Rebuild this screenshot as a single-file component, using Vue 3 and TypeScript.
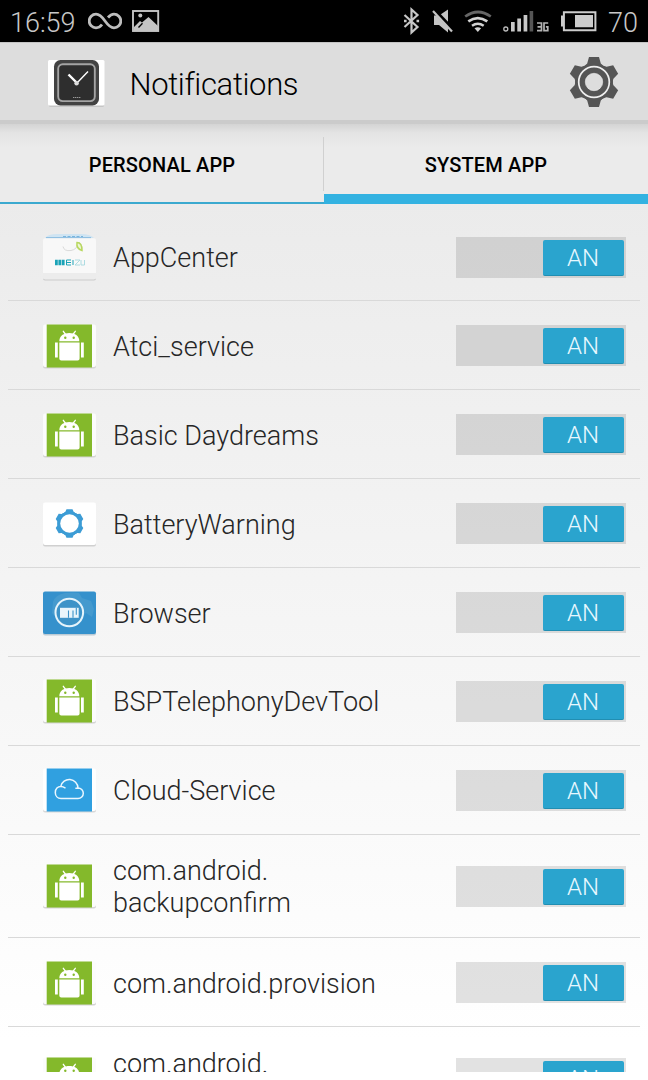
<script setup lang="ts">
type IconKind = 'store' | 'android' | 'battery' | 'browser' | 'cloud'

interface AppEntry {
  id: number
  lines: string[]
  icon: IconKind
  tall?: boolean
}

const tabs = [
  { label: 'PERSONAL APP', active: false },
  { label: 'SYSTEM APP', active: true },
]

const apps: AppEntry[] = [
  { id: 1, lines: ['AppCenter'], icon: 'store' },
  { id: 2, lines: ['Atci_service'], icon: 'android' },
  { id: 3, lines: ['Basic Daydreams'], icon: 'android' },
  { id: 4, lines: ['BatteryWarning'], icon: 'battery' },
  { id: 5, lines: ['Browser'], icon: 'browser' },
  { id: 6, lines: ['BSPTelephonyDevTool'], icon: 'android' },
  { id: 7, lines: ['Cloud-Service'], icon: 'cloud' },
  { id: 8, lines: ['com.android.', 'backupconfirm'], icon: 'android', tall: true },
  { id: 9, lines: ['com.android.provision'], icon: 'android' },
  { id: 10, lines: ['com.android.'], icon: 'android', tall: true },
]

const teeth = [0, 60, 120, 180, 240, 300]
</script>

<template>
  <div class="screen">
    <div class="status">
      <span class="time">16:59</span>
      <svg class="infinity" width="34" height="20" viewBox="0 0 34 20">
        <path d="M20 6.500C22 4.200 24 3.200 26 3.200a6.800 6.800 0 0 1 0 13.600C22 16.800 19.500 13.500 17 10S12 3.200 8 3.200a6.800 6.800 0 0 0 0 13.600C10.500 16.800 12.500 15.500 14 13.500" fill="none" stroke="#bdbdbd" stroke-width="2.800" />
      </svg>
      <svg class="picture" width="28" height="22" viewBox="0 0 28 22">
        <rect x="1" y="1" width="25.200" height="20" fill="none" stroke="#c4c4c4" stroke-width="1.900" />
        <circle cx="8.300" cy="5.500" r="2" fill="#c4c4c4" />
        <path d="M2 21v-4l6-6 2 1.500L16.500 7l9.500 9v5z" fill="#c4c4c4" />
        <path d="M6.500 17.500l4-4.200" stroke="#000" stroke-width="1.300" />
      </svg>
      <span class="spacer"></span>
      <svg class="indicators" width="200" height="42" viewBox="400 0 200 42">
        <path d="M404.500 15l13 12-6 5.500V9.500l6 5.500-13 12" fill="none" stroke="#c8c8c8" stroke-width="2.200" />
        <path d="M404 21h2.600M416.500 21h2.600" stroke="#c8c8c8" stroke-width="2.400" />
        <path d="M434 15.500h5l9-6v23l-9-7.500h-5z" fill="#c4c4c4" />
        <path d="M433.500 9.500l20 21" stroke="#000" stroke-width="4" />
        <path d="M433 11l19 20.500" stroke="#c4c4c4" stroke-width="2.200" />
        <g fill="none">
          <path d="M465.200 16.500q12.800-9 25.600 0" stroke="#666" stroke-width="2.700" />
          <path d="M468.300 21.300q9.500-6.500 19 0" stroke="#d2d2d2" stroke-width="2.700" />
          <path d="M472 25.800q5.800-4 11.700 0" stroke="#d2d2d2" stroke-width="2.500" />
        </g>
        <path d="M474.500 28.300q3.300-2 6.600 0l-3.300 3.600z" fill="#d2d2d2" />
        <circle cx="505.800" cy="29" r="2" fill="none" stroke="#bbb" stroke-width="1.300" />
        <path d="M511 22h3.700v9.500H511zM517.300 18.500h3.700v13h-3.700zM523.600 15h3.700v16.500h-3.700z" fill="#c8c8c8" />
        <path d="M529.600 11h3.600v20.500h-3.600z" fill="#555" />
        <path d="M537 23h4.500v7.700H537M537.500 26.800h4M548.200 23H544v7.700h3.800v-3.900h-1.900" fill="none" stroke="#b4b4b4" stroke-width="1.700" />
        <path d="M563.900 12.200h31.500v18h-31.500z" fill="none" stroke="#ccc" stroke-width="2" />
        <path d="M561 15.500h2.500v11H561zM575 15h18v12.200h-18z" fill="#ccc" />
      </svg>
      <span class="percent">70</span>
    </div>

    <header class="bar">
      <svg class="watch" width="60" height="54" viewBox="46 57 60 54">
        <rect x="49" y="62" width="55" height="45" rx="1.500" fill="#c6c6c6" />
        <rect x="48" y="60" width="56.500" height="45.500" rx="1.500" fill="#fff" />
        <rect x="54" y="60" width="45" height="45.500" rx="6.500" fill="#424242" />
        <rect x="58.200" y="64.300" width="36.600" height="36.800" rx="4.500" fill="#2e2e2e" stroke="#a4a4a4" stroke-width="1.900" />
        <path d="M68.500 74.500l8.500 8.500" stroke="#fff" stroke-width="2.400" />
        <path d="M76 84l12-12.500" stroke="#fff" stroke-width="1.400" />
        <circle cx="76.600" cy="83.300" r="2.200" fill="#ddd" />
        <path d="M73 97.500h8" stroke="#999" stroke-width="1.200" stroke-dasharray="1.400 .6" />
      </svg>
      <h1 class="title">Notifications</h1>
      <svg class="gear" width="52" height="52" viewBox="-26 -26 52 52">
        <g fill="#555">
          <circle r="19" />
          <path v-for="a in teeth" :key="a" :transform="`rotate(${a})`" d="M-5-25H5L6.800-18.500 10-15H-10L-6.800-18.500z" />
        </g>
        <circle r="15.300" fill="none" stroke="#eee" stroke-width="1.700" />
        <circle r="8.700" fill="#ddd" stroke="#eee" stroke-width=".6" />
      </svg>
    </header>

    <nav class="tabs">
      <button v-for="tab in tabs" :key="tab.label" class="tab" :class="{ active: tab.active }">
        {{ tab.label }}
      </button>
    </nav>

    <main class="list">
      <div v-for="app in apps" :key="app.id" class="row" :class="{ tall: app.tall }">
        <svg class="icon" width="57" height="50" viewBox="-2 -2 57 50">
          <template v-if="app.icon === 'store'">
            <path d="M2 3Q5-1 14-1h24q9 0 13 4z" fill="#cfe4f2" />
            <path d="M3 2.800h45" stroke="#77b1dc" stroke-width="1" />
            <path d="M20 1.500h20" stroke="#79b5de" stroke-dasharray="3 1.500" />
            <rect x="0" y="5" width="53" height="40.500" rx="2" fill="#ccc" />
            <rect x="0" y="3.300" width="53" height="41" rx="2" fill="#f8f8f8" />
            <path d="M0 38h53v4.300a2 2 0 0 1-2 2H2a2 2 0 0 1-2-2z" fill="#ececec" />
            <path d="M20 11.500q1 5 8 4 6-1 8-8 3 1 3 7" fill="none" stroke="#dadada" />
            <path d="M34 7.500q5 0 5 8-6-2-5-8z" fill="#eef6d8" stroke="#b8d85f" stroke-width="1.500" />
            <g fill="none" stroke="#1aa3b7">
              <path d="M12 27.500h10" stroke-width="5.500" stroke-dasharray="2.800 .6" />
              <path d="M28 25h-4.500v5H28M23.500 27.500H28M30 25v5" stroke-width="1" />
              <path d="M32 25h5l-5 5h5M38 25v5h3.500v-5" stroke="#a5d8df" stroke-width=".9" />
            </g>
          </template>
          <template v-else-if="app.icon === 'android'">
            <rect x="0" y="2" width="53" height="42.500" rx="2" fill="#d4d4d4" />
            <rect x="0" y=".5" width="53" height="42.500" rx="2" fill="#fcfcfc" />
            <rect x="3.700" y=".5" width="45.300" height="43" fill="#84b92b" />
            <path d="M16.300 17.300c0-5.500 4.400-8.300 10-8.300s10 2.800 10 8.300z" fill="#fff" />
            <path d="M22.300 10L20.300 7.300M30.300 10l2-2.700" stroke="#fff" stroke-width="1.300" stroke-linecap="round" />
            <circle cx="22.300" cy="13.800" r="1.200" fill="#84b92b" />
            <circle cx="30.700" cy="13.800" r="1.200" fill="#84b92b" />
            <path d="M16.300 18.600h20.300v16a2 2 0 0 1-2 2H18.300a2 2 0 0 1-2-2zM12 18.600h2.800v15H12zM38 18.600h2.800v15H38z" fill="#fff" />
          </template>
          <template v-else-if="app.icon === 'battery'">
            <rect x="0" y="2" width="53" height="42.500" rx="2" fill="#d0d0d0" />
            <rect x="0" y=".5" width="53" height="42.500" rx="2" fill="#fff" />
            <g transform="translate(26.500 21.500)" fill="#3c9cd5">
              <circle r="12" />
              <path v-for="a in teeth" :key="a" :transform="`rotate(${a})`" d="M-3-14.200H3L4.300-11.500 8-9H-8L-4.300-11.500z" />
              <circle r="9.300" fill="#fff" />
            </g>
          </template>
          <template v-else-if="app.icon === 'browser'">
            <rect x="0" y="2" width="53" height="42.500" rx="2" fill="#bccbd5" />
            <rect x="0" y=".5" width="53" height="42.500" rx="2" fill="#3591cc" />
            <path d="M10 11q2-7 12-9 9-1 14 0l3 5 9 3 3 8-2 8-6-4-5 5-20 5-9-10z" fill="#459ace" />
            <circle cx="26.300" cy="21.500" r="13.800" fill="#3d93c8" stroke="#e5f4fb" stroke-width="2" />
            <path d="M17 16.800h18.700v10H17z" fill="#e9f5fb" />
            <path d="M25.500 19.600v7.200M30 19.600v7.200M33.300 16.800v7" stroke="#3d93c8" stroke-width="1.100" />
          </template>
          <template v-else>
            <rect x="0" y="2" width="53" height="42.500" rx="2" fill="#d8d8d8" />
            <rect x="0" y=".5" width="53" height="42.500" rx="2" fill="#fff" />
            <rect x="3.700" y=".5" width="45.300" height="43" fill="#30a0e0" />
            <path d="M17.500 30.500h17.500a5.300 5.300 0 0 0 0-10.600l-2 .4M35 19.900a8.700 8.700 0 0 0-17.200-1.500c-3 0-5.500 2.500-5.500 6 0 3.600 2.400 6.100 5.700 6.100M17.800 18.400q2.500 0 4.200 1.400" fill="none" stroke="#eaf7ff" stroke-width="1.500" stroke-linecap="round" />
          </template>
        </svg>
        <div class="name">
          <span v-for="line in app.lines" :key="line">{{ line }}</span>
        </div>
        <div class="switch"><span class="thumb">AN</span></div>
      </div>
    </main>
  </div>
</template>

<style>
html,
body {
  margin: 0;
  background: #fff;
}
</style>

<style scoped>
.screen {
  width: 648px;
  height: 1080px;
  overflow: hidden;
  display: flex;
  flex-direction: column;
  background: linear-gradient(#e8e8e8 40px, #ebebeb 200px, #fff 1040px);
  font-family: Roboto, "Noto Sans", sans-serif;
  font-weight: 300;
  color: #262626;
}
.status {
  flex: none;
  height: 42px;
  box-sizing: border-box;
  padding: 0 11px 0 10px;
  display: flex;
  align-items: center;
  background: #000;
  color: #c8c8c8;
  font-size: 27px;
}
.time {
  width: 67px;
  padding-top: 3px;
}
.infinity {
  margin-left: 11px;
}
.picture {
  margin-left: 10px;
}
.spacer {
  flex: 1;
}
.indicators {
  flex: none;
}
.percent {
  width: 29px;
  margin-left: 8px;
  padding-top: 3px;
}
.bar {
  flex: none;
  height: 82px;
  box-sizing: border-box;
  padding: 0 28px 2px 46px;
  display: flex;
  align-items: center;
  background: #ddd;
  border-top: 1px solid #c4c4c4;
  border-bottom: 4px solid #cbcbcb;
}
.watch {
  margin-top: 6px;
}
.title {
  flex: 1;
  margin: 8px 0 0 23.500px;
  font-size: 31px;
  line-height: 36px;
  letter-spacing: -.35px;
  font-weight: 300;
  color: #000;
}
.gear {
  margin-top: 3px;
}
.tabs {
  flex: none;
  height: 80px;
  display: flex;
  background: linear-gradient(#d4d4d4, #e4e4e4 9px, #ebebeb 24px, #ebebeb);
}
.tab {
  flex: 1;
  border: 0;
  padding: 2px 0 0;
  background: linear-gradient(#d0d0d0, #d0d0d0) right 13px / 1px 54px no-repeat;
  font: 500 20px/24px Roboto, sans-serif;
  letter-spacing: .15px;
  color: #000;
  box-shadow: inset 0 -2px #3ba9cf;
}
.tab.active {
  background: none;
  box-shadow: inset 0 -10px #33b2e1;
}
.list {
  flex: none;
  height: 867.500px;
  box-sizing: border-box;
  overflow: hidden;
  padding: 8.600px 8px 0;
}
.row {
  height: 88.880px;
  box-sizing: border-box;
  border-bottom: 1px solid #d9d9d9;
  padding: 0 14px 0 33px;
  display: flex;
  align-items: center;
}
.row.tall {
  height: 103.500px;
}
.icon {
  flex: none;
  margin-top: 3px;
}
.name {
  flex: 1;
  margin-left: 15px;
  padding-top: 3px;
  display: flex;
  flex-direction: column;
  font-size: 27px;
  line-height: 32px;
}
.tall .name {
  min-height: 64px;
}
.switch {
  flex: none;
  width: 170px;
  height: 41px;
  margin-top: 1px;
  box-sizing: border-box;
  padding: 3px 2px 2px 87px;
  background: rgba(0, 0, 0, .115);
}
.thumb {
  display: block;
  height: 36px;
  box-sizing: border-box;
  border-radius: 2px;
  border-bottom: 1.500px solid #218eb2;
  background: #2aa4ce;
  color: #e7f8ff;
  font-size: 24px;
  line-height: 37px;
  text-align: center;
  padding-right: 1px;
}
</style>
